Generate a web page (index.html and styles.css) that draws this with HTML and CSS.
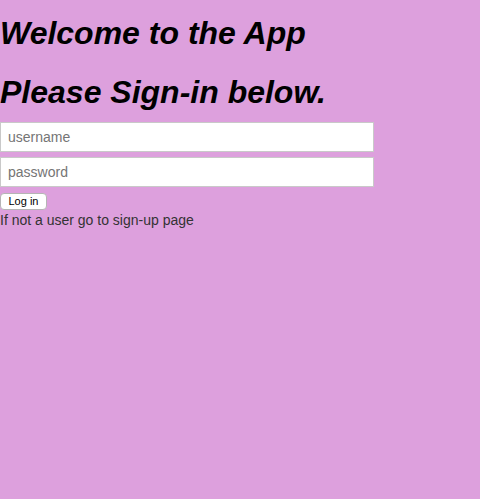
FILE: index.html
```html
<!DOCTYPE html>
<html>
<head>
<meta charset="utf-8">
<link rel="stylesheet" href="styles.css">
</head>
<body>
<main class="page">
  <h1 class="title first">Welcome to the App</h1>
  <h1 class="title second">Please Sign-in below.</h1>
  <form class="login">
    <input class="field" type="text" placeholder="username">
    <input class="field" type="password" placeholder="password">
    <button class="btn" type="button">Log in</button>
  </form>
  <p class="note">If not a user go to sign-up page</p>
</main>
</body>
</html>
```

FILE: styles.css
```css
html, body {
  margin: 0;
  padding: 0;
  background: #dda0dd;
  height: 100%;
}
body {
  font-family: "Liberation Sans", Arial, sans-serif;
  color: #333;
}
.page {
  display: flex;
  flex-direction: column;
  align-items: flex-start;
}
.title {
  font-size: 32px;
  font-weight: bold;
  font-style: italic;
  line-height: 37px;
  color: #000;
  margin: 0;
}
.first {
  margin-top: 15px;
}
.second {
  margin-top: 22px;
}
.login {
  display: flex;
  flex-direction: column;
  align-items: flex-start;
  margin-top: 11px;
}
.field {
  box-sizing: border-box;
  width: 374px;
  height: 30px;
  margin: 0 0 5px;
  padding: 0 7px;
  border: 1px solid #c9c9c9;
  border-radius: 0;
  background: #fff;
  font-family: "Liberation Sans", Arial, sans-serif;
  font-size: 14px;
  color: #333;
  outline: none;
}
.field::placeholder {
  color: #757575;
}
.btn {
  box-sizing: border-box;
  margin-top: 1px;
  height: 17px;
  width: 47px;
  padding: 0;
  border: 1px solid #b5b5b5;
  border-radius: 4px;
  background: #fff;
  font-family: "Liberation Sans", Arial, sans-serif;
  font-size: 11px;
  line-height: 15px;
  color: #000;
}
.note {
  margin: 2px 0 0;
  font-size: 14px;
  line-height: 16px;
  color: #333;
}
```
